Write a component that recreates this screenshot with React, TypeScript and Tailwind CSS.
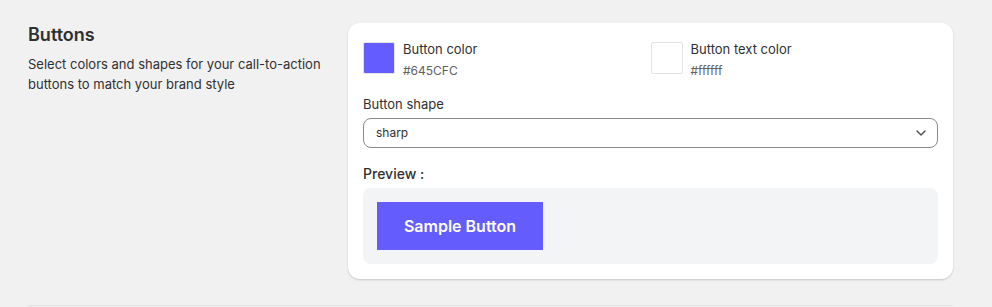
import { ChevronDown } from 'lucide-react';

type Swatch = {
  label: string;
  value: string;
  color: string;
};

const swatches: Swatch[] = [
  { label: 'Button color', value: '#645CFC', color: '#645CFC' },
  { label: 'Button text color', value: '#ffffff', color: '#ffffff' },
];

function ColorField({ swatch }: { swatch: Swatch }) {
  return (
    <div className="flex items-start gap-[8px]">
      <div
        className="w-[32px] h-[32px] rounded-[2px] border border-[#e3e3e3] flex-shrink-0"
        style={{ backgroundColor: swatch.color }}
      />
      <div className="flex flex-col">
        <span className="text-[13px] leading-[20px] text-[#303030] -mt-[3px]">{swatch.label}</span>
        <span className="text-[12px] leading-[16px] text-[#616161] mt-[4px]">{swatch.value}</span>
      </div>
    </div>
  );
}

export default function App() {
  return (
    <div
      className="min-h-[307px] bg-[#f1f1f1] pl-[28px] pr-[39px] pt-[23px]"
      style={{ fontFamily: 'Inter, "Noto Sans", sans-serif' }}
    >
      <div className="flex">
        <div className="w-[320px] flex-shrink-0">
          <h2 className="text-[18px] leading-[22px] font-semibold text-[#303030] mt-[1px]">Buttons</h2>
          <p className="text-[13px] leading-[20px] text-[#303030] mt-[8px]">
            Select colors and shapes for your call-to-action buttons to match your brand style
          </p>
        </div>

        <div className="flex-1 bg-white rounded-[12px] shadow-[0_1px_2px_rgba(0,0,0,0.18)] px-[15px] pt-[19px] pb-[15px]">
          <div className="grid grid-cols-2">
            {swatches.map((s) => (
              <ColorField key={s.label} swatch={s} />
            ))}
          </div>

          <div className="mt-[15px]">
            <label className="block text-[13px] leading-[20px] text-[#303030]">Button shape</label>
            <div className="mt-[4px] h-[30px] rounded-[8px] border border-[#8a8a8a] flex items-center justify-between pl-[12px] pr-[8px]">
              <span className="text-[12px] text-[#303030]">sharp</span>
              <ChevronDown className="w-4 h-4 text-[#4a4a4a]" strokeWidth={2} />
            </div>
          </div>

          <div className="mt-[16px]">
            <div className="text-[14px] leading-[20px] font-medium text-[#303030]">Preview :</div>
            <div className="mt-[4px] bg-[#f3f4f6] rounded-[8px] p-[14px]">
              <button className="w-[166px] h-[48px] bg-[#645CFC] text-white text-[16px] font-semibold">
                Sample Button
              </button>
            </div>
          </div>
        </div>
      </div>

      <div className="mt-[26px] h-px bg-[#e3e3e3] mr-0" />
    </div>
  );
}
